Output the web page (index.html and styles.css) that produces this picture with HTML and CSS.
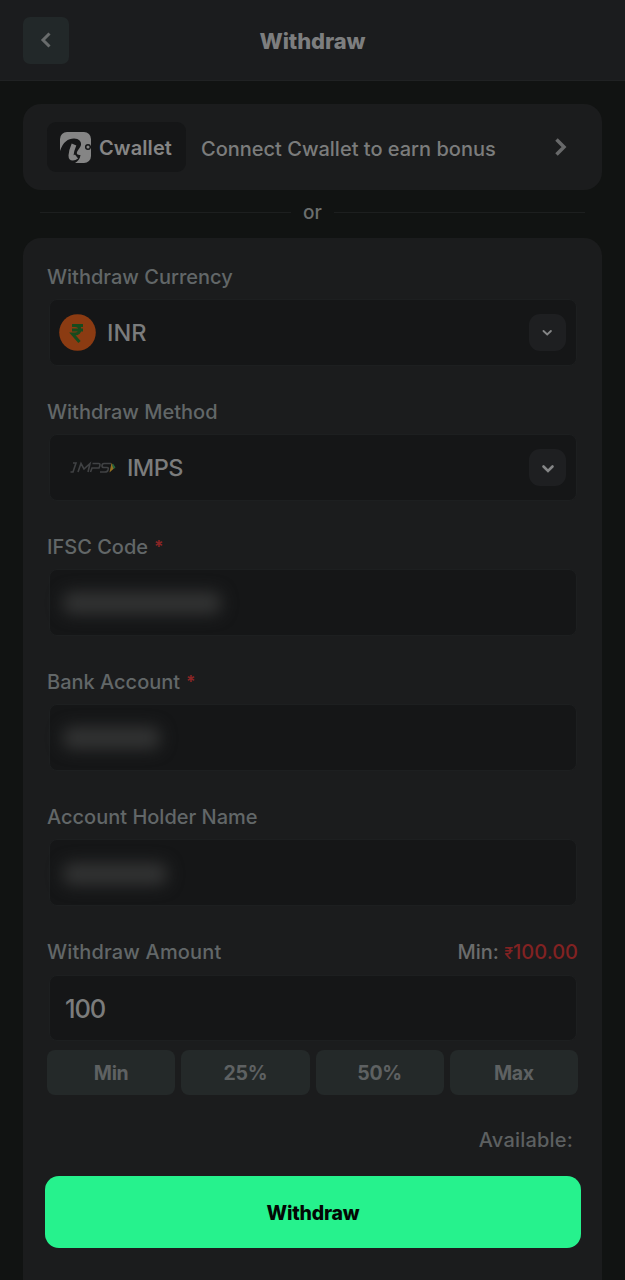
FILE: index.html
```
<!DOCTYPE html>
<html lang="en">
<head>
    <meta charset="UTF-8">
    <meta name="viewport" content="width=device-width, initial-scale=1.0">
    <title>Withdraw</title>
    <link rel="stylesheet" href="styles.css">
</head>
<body>
    <header class="header">
        <button class="back-button" aria-label="Back">
            <svg width="12" height="16" viewBox="0 0 12 16"><path d="M9.500 1.500 L3 8 L9.500 14.500"/></svg>
        </button>
        <h1 class="title">Withdraw</h1>
    </header>

    <main class="content">
        <a class="cwallet">
            <span class="cwallet-logo">
                <svg width="31" height="31" viewBox="0 0 31 31">
                    <rect class="logo-bg" width="31" height="31" rx="7"/>
                    <path class="logo-cut" d="M0 19 C3 10 8 6.500 14 6.500 C19 6.500 21.500 9.500 21 13 C20.500 15.500 18 17.500 17 20 C16.500 22 17 23 20.500 23 C20 27 18 29 15 31 L0 31 Z"/>
                    <path class="logo-hook" d="M14 12.500 C12.500 16 11.200 20 11 23.500 C11 27 14 26.500 16.500 24.500"/>
                    <circle class="logo-eye" cx="28" cy="15" r="2.300"/>
                </svg>
                <span class="brand">Cwallet</span>
            </span>
            <span class="cwallet-text">Connect Cwallet to earn bonus</span>
            <svg class="arrow" width="14" height="20" viewBox="0 0 14 20"><path d="M2.500 2.500 L10 10 L2.500 17.500"/></svg>
        </a>

        <div class="divider"><span>or</span></div>

        <form class="form">
            <div class="field">
                <div class="label">Withdraw Currency</div>
                <div class="box select">
                    <svg class="rupee" width="37" height="37" viewBox="0 0 37 37">
                        <circle cx="18.500" cy="18.500" r="18.300"/>
                        <path d="M13 11.500 H24 M13 16 H24 M13 11.500 H16 C22.500 11.500 22.500 20 16 20 H13.500 L20.500 28"/>
                    </svg>
                    <span class="value">INR</span>
                    <span class="toggle"><svg width="14" height="14" viewBox="0 0 14 14"><path class="thin" d="M2.500 5 L6.200 8.500 L9.900 5"/></svg></span>
                </div>
            </div>

            <div class="field">
                <div class="label">Withdraw Method</div>
                <div class="box select">
                    <svg class="imps" width="48" height="14" viewBox="0 0 48 14">
                        <path class="letters" d="M3 2 H6 L3 11 H0.500 M8 11 L11 2.500 L14 8 L20 2.500 L18 11 M20.500 11 L22 7 H29 Q31 2.500 29 2.500 H22.500 M41 2.500 H34 Q32 2.500 32 5 Q32 6.500 34 6.500 H37 Q39 6.500 38 9 Q37.500 11 35 11 H30"/>
                        <path class="orange" d="M39.500 11.500 L41.500 2 L45 6.500 Z"/>
                        <path class="green" d="M42 4 L43 2.500 L45.500 6.500 L43.500 8 Z"/>
                    </svg>
                    <span class="value value-method">IMPS</span>
                    <span class="toggle"><svg width="14" height="14" viewBox="0 0 14 14"><path d="M2.500 5.500 L7 10 L11.500 5.500"/></svg></span>
                </div>
            </div>

            <div class="field">
                <div class="label">IFSC Code<span class="required">*</span></div>
                <div class="box"><span class="masked masked-code"></span></div>
            </div>

            <div class="field">
                <div class="label">Bank Account<span class="required">*</span></div>
                <div class="box"><span class="masked masked-account"></span></div>
            </div>

            <div class="field">
                <div class="label">Account Holder Name</div>
                <div class="box"><span class="masked masked-name"></span></div>
            </div>

            <div class="amount">
                <div class="label">
                    <span class="amount-label">Withdraw Amount</span>
                    <span class="minimum">Min: <span class="red"><span class="rupee-sign">₹</span>100.00</span></span>
                </div>
                <div class="box amount-box"><span class="amount-value">100</span></div>
                <div class="presets">
                    <button type="button">Min</button>
                    <button type="button">25%</button>
                    <button type="button">50%</button>
                    <button type="button">Max</button>
                </div>
            </div>

            <div class="available">Available:</div>
            <button type="button" class="submit">Withdraw</button>
        </form>
    </main>
</body>
</html>
```
FILE: styles.css
```
* {
    box-sizing: border-box;
}

body {
    margin: 0;
    height: 1280px;
    overflow: hidden;
    background: #111312;
    color: #7b7c7c;
    font-family: Inter, "Noto Sans", sans-serif;
    font-size: 20px;
    font-weight: 500;
}

button {
    border: none;
    font-family: inherit;
}

svg {
    flex: none;
    fill: none;
}

/* Header */
.header {
    display: grid;
    grid-template-columns: 46px 1fr 46px;
    align-items: center;
    height: 81px;
    padding: 0 23px;
    background: #1b1c1e;
    border-bottom: 1px solid #202223;
}

.back-button {
    display: flex;
    align-items: center;
    justify-content: center;
    width: 46px;
    height: 47px;
    padding: 0;
    border-radius: 7px;
    background: #222829;
}

.back-button path {
    stroke: #696c6c;
    stroke-width: 3;
}

.title {
    margin: 0;
    padding-top: 1px;
    text-align: center;
    font-size: 22px;
    font-weight: 800;
    line-height: 30px;
    letter-spacing: -0.1px;
    color: #7d7e7f;
}

/* Cwallet banner */
.content {
    padding: 23px 23px 0;
}

.cwallet {
    display: flex;
    align-items: center;
    height: 86px;
    padding: 0 34px 0 24px;
    border-radius: 18px;
    background: #1b1c1d;
}

.cwallet-logo {
    display: flex;
    align-items: center;
    gap: 8px;
    width: 139px;
    height: 50px;
    padding-left: 13px;
    border-radius: 9px;
    background: #151617;
    color: #858585;
    font-size: 20px;
    font-weight: 600;
}

.brand {
    padding-top: 2px;
    letter-spacing: 0.1px;
}

.logo-bg {
    fill: #858585;
}

.logo-cut {
    fill: #151617;
}

.logo-hook {
    stroke: #858585;
    stroke-width: 5;
}

.logo-eye {
    stroke: #151617;
    stroke-width: 1.5;
}

.cwallet-text {
    flex: 1;
    padding: 3px 0 0 15px;
    white-space: nowrap;
}

.arrow path {
    stroke: #68696a;
    stroke-width: 3.5;
}

.divider {
    display: flex;
    align-items: center;
    gap: 12px;
    height: 48px;
    padding: 0 17px 3px;
    font-size: 19px;
    color: #6b6e6d;
}

.divider::before,
.divider::after {
    content: "";
    flex: 1;
    height: 1px;
    background: #1d1f1f;
}

/* Form */
.form {
    height: 1060px;
    padding: 24px 24px 0;
    border-radius: 18px 18px 0 0;
    background: #1b1c1d;
}

.field {
    height: 135px;
}

.label {
    display: flex;
    align-items: center;
    height: 30px;
    color: #626768;
    white-space: nowrap;
}

.required {
    margin-left: 6px;
    color: #8a2525;
    font-size: 17px;
    font-weight: 700;
    line-height: 24px;
}

.box {
    display: flex;
    align-items: center;
    height: 67px;
    margin: 7px 1px 0 2px;
    border: 1px solid #1d1f20;
    border-radius: 8px;
    background: #151617;
}

.select {
    padding: 0 10px 0 9px;
}

.value {
    flex: 1;
    margin-left: 11px;
    font-size: 23.5px;
}

.value-method {
    letter-spacing: -0.6px;
}

.toggle {
    display: flex;
    align-items: center;
    justify-content: center;
    width: 37px;
    height: 37px;
    border-radius: 11px;
    background: #1e1f21;
}

.toggle path {
    stroke: #858687;
    stroke-width: 2.6;
    stroke-linecap: round;
}

.toggle .thin {
    stroke-width: 1.9;
}

.rupee circle {
    fill: #8b3b12;
}

.rupee path {
    stroke: #174b1d;
    stroke-width: 3;
}

.imps {
    margin-left: 11px;
    margin-right: -2px;
}

.imps .letters {
    stroke: #404244;
    stroke-width: 1.6;
}

.imps .green {
    fill: #24613d;
}

.imps .orange {
    fill: #947021;
}

/* Hidden account details */
.masked {
    height: 22px;
    margin-left: 13px;
    border-radius: 8px;
    background: #333434;
    filter: blur(8px);
}

.masked-code {
    width: 158px;
}

.masked-account {
    width: 97px;
}

.masked-name {
    width: 104px;
    margin-top: 2px;
}

/* Amount */
.amount .label {
    justify-content: space-between;
}

.amount-label {
    letter-spacing: 0.15px;
}

.minimum {
    color: #6b6c6c;
}

.red {
    color: #822222;
}

.rupee-sign {
    font-size: 16px;
}

.amount-box {
    height: 66px;
    margin-top: 8px;
    padding-left: 15px;
    font-size: 25.5px;
}

.amount-value {
    letter-spacing: -1.1px;
}

.presets {
    display: grid;
    grid-template-columns: repeat(4, 1fr);
    gap: 6px;
    margin-top: 9px;
}

.presets button {
    height: 45px;
    padding: 0;
    border-radius: 8px;
    background: #242929;
    color: #5e6162;
    font-size: 19.5px;
    font-weight: 700;
    letter-spacing: -0.3px;
}

.available {
    height: 30px;
    margin: 30px 5px 0 0;
    text-align: right;
    line-height: 30px;
    letter-spacing: 0.2px;
    color: #5d6061;
}

.submit {
    display: block;
    width: calc(100% + 5px);
    height: 72px;
    margin: 21px -3px 0 -2px;
    padding-top: 3px;
    border-radius: 14px;
    background: #26f28d;
    color: #030805;
    font-size: 19.5px;
    font-weight: 800;
    letter-spacing: -0.2px;
}
```
